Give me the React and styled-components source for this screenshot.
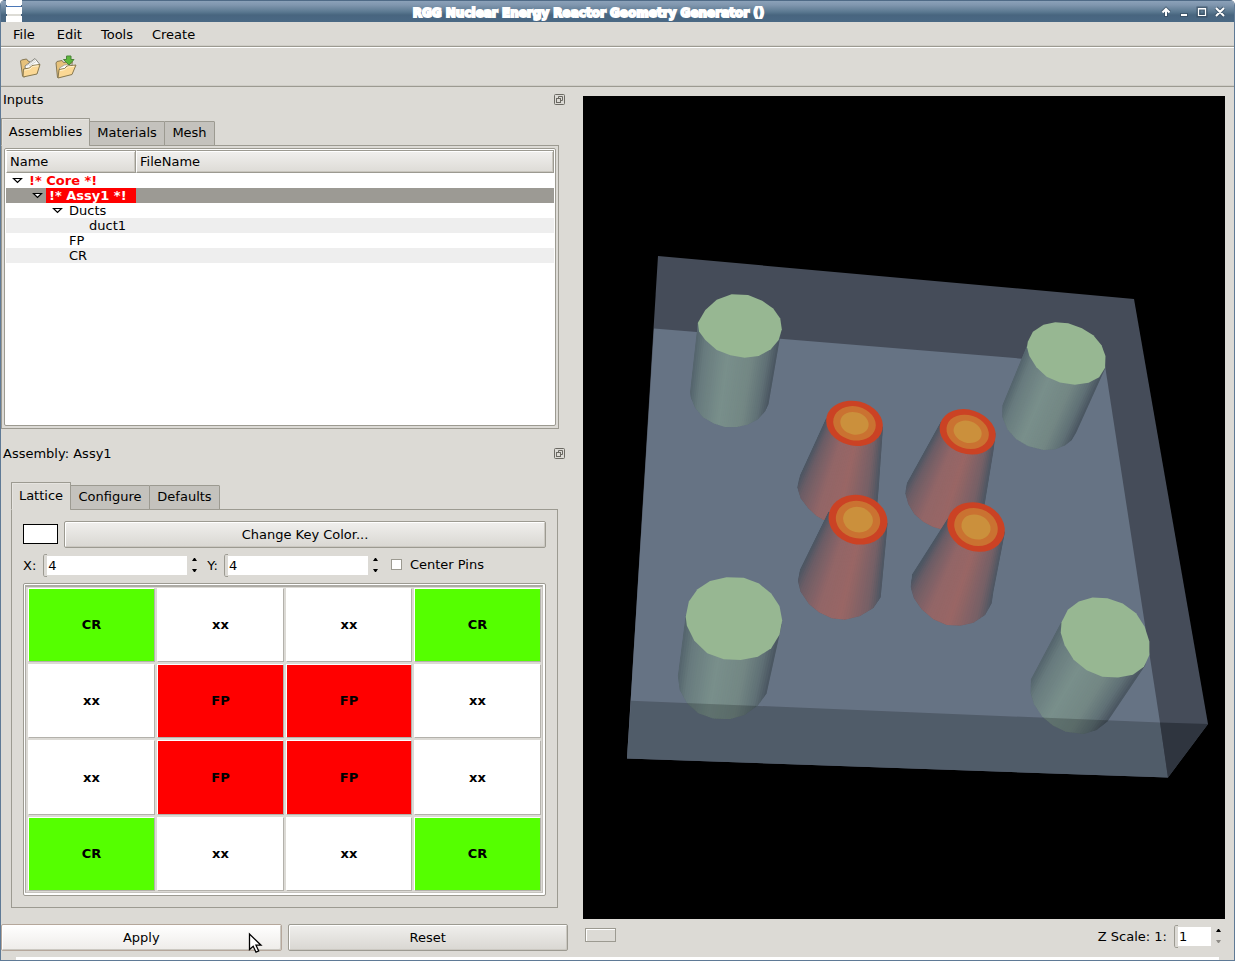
import React from "react";
import styled, { createGlobalStyle, css } from "styled-components";

const BG = "#dcdad5";
const LINE = "#9c9a91";

const GlobalStyle = createGlobalStyle`
  *, *::before, *::after { box-sizing: border-box; }
  html, body { margin: 0; padding: 0; background: #fff; }
  body { font: 13px/15px "DejaVu Sans", sans-serif; color: #000; overflow: hidden; }
`;

const Window = styled.div`
  position: relative;
  width: 1235px;
  height: 961px;
  display: flex;
  flex-direction: column;
  background: ${BG};
  border: 1px solid #5f7a96;
  border-top: 0;
  border-radius: 5px 5px 0 0;
  overflow: hidden;
`;

const TitleBar = styled.header`
  height: 22px;
  flex: none;
  display: flex;
  align-items: center;
  padding: 0 8px 0 5px;
  background: linear-gradient(#4f6a86 0, #4f6a86 1px, #8ba1b8 1px, #8096ae 5px, #5a7890 12px, #48657f 15px, #4a6884 22px);
`;

const AppMark = styled.svg`
  width: 16px;
  height: 22px;
  flex: none;
`;

const Title = styled.h1`
  flex: 1;
  margin: 0 0 0 -3px;
  padding-top: 4px;
  text-align: center;
  white-space: nowrap;
  font: bold 12px/18px "DejaVu Sans", sans-serif;
  color: #fff;
  -webkit-text-stroke: 1.8px #fff;
`;

const WindowControls = styled.svg`
  width: 68px;
  height: 22px;
  flex: none;
`;

const MenuBar = styled.nav`
  height: 26px;
  flex: none;
  display: flex;
  gap: 19px;
  padding: 5px 12px 0;
  border-bottom: 1px solid #fff;
  box-shadow: inset 0 -1px ${LINE}, inset 0 -2px #cfcdc7;
`;

const MenuItem = styled.span`
  &:first-child { margin-right: 3px; }
`;

const ToolBar = styled.div`
  height: 39px;
  flex: none;
  display: flex;
  gap: 12px;
  padding: 7px 16px 0;
  border-bottom: 1px solid ${LINE};
  box-shadow: inset 0 -1px #cfcdc7;
`;

const ToolIcon = styled.svg`
  width: 24px;
  height: 24px;
`;

const Content = styled.main`
  flex: 1;
  min-height: 0;
  display: flex;
  gap: 15px;
`;

const Side = styled.section`
  width: 567px;
  display: flex;
  flex-direction: column;
`;

const DockTitle = styled.div`
  height: 25px;
  display: flex;
  align-items: center;
  justify-content: space-between;
  margin-top: ${(p) => p.$top || 0}px;
  padding: 0 3px 0 2px;
`;

const FloatIcon = styled.svg`
  width: 11px;
  height: 11px;
`;

const Tabs = styled.div`
  display: flex;
  flex-direction: column;
  margin: ${(p) => p.$margin};
`;

const TabRow = styled.div`
  height: 28px;
  display: flex;
  align-items: flex-end;
  position: relative;
  margin-bottom: -1px;
`;

const Tab = styled.div`
  height: 25px;
  width: ${(p) => p.$w}px;
  margin-left: -1px;
  text-align: center;
  line-height: 22px;
  background: #c4c2bd;
  border: 1px solid ${LINE};
  border-radius: 1px 1px 0 0;
  ${(p) =>
    p.$active &&
    css`
      height: 28px;
      margin-left: 0;
      line-height: 26px;
      background: ${BG};
      border-bottom-color: ${BG};
      box-shadow: inset 1px 1px #e6e4e0;
    `}
`;

const Pane = styled.div`
  height: ${(p) => p.$h}px;
  border: 1px solid ${LINE};
  padding: ${(p) => p.$pad};
`;

const Tree = styled.div`
  height: 278px;
  border: 1px solid ${LINE};
  border-radius: 2px;
  padding: 1px 1px 0;
  background: #fff;
`;

const TreeHeader = styled.div`
  display: flex;
  height: 23px;
`;

const HeaderCell = styled.div`
  width: ${(p) => p.$w}px;
  padding-left: 3px;
  line-height: 21px;
  border: 1px solid ${LINE};
  border-left-color: #fff;
  background: linear-gradient(#f1f0ee, #dddbd6);
  box-shadow: inset 0 1px #fff, inset -1px -1px #c9c6be;
`;

const TreeRow = styled.div`
  height: 15px;
  display: flex;
  padding-left: ${(p) => p.$depth * 20 + 3}px;
  background: ${(p) => (p.$selected ? "#9c9a94" : p.$alt ? "#eeeeee" : "#fff")};
`;

const Twist = styled.svg`
  width: 17px;
  height: 15px;
  flex: none;
`;

const TreeLabel = styled.span`
  padding-left: 3px;
  ${(p) => p.$bold && css`font-weight: bold; color: #f00;`}
  ${(p) => p.$fill && css`width: 90px; color: #fff; background: #f00;`}
`;

const Button = styled.button`
  flex: 1;
  height: 27px;
  padding: 0;
  font: inherit;
  line-height: 24px;
  color: #000;
  border: 1px solid ${(p) => (p.$hover ? "#b5a79b" : LINE)};
  border-radius: 2px;
  background: ${(p) => (p.$hover ? "linear-gradient(#fff, #eeece9)" : "linear-gradient(#f0efed, #d9d7d2)")};
  box-shadow: inset 1px 1px #fff, inset -1px -1px #cbc8c1;
`;

const KeyRow = styled.div`
  display: flex;
  align-items: center;
  gap: 6px;
`;

const Swatch = styled.div`
  width: 35px;
  height: 20px;
  margin-bottom: 1px;
  border: 1px solid #000;
  background: #fff;
`;

const SizeRow = styled.div`
  display: flex;
  align-items: center;
  height: 35px;
`;

const Label = styled.label`
  white-space: nowrap;
  margin: ${(p) => p.$m || 0};
`;

const SpinField = styled.div`
  width: ${(p) => p.$w}px;
  height: 23px;
  display: flex;
  align-items: center;
  border-left: 1px solid ${LINE};
  border-radius: 3px 0 0 3px;
  background:
    linear-gradient(${LINE}, ${LINE}) 0 0 / 3px 1px no-repeat,
    linear-gradient(${LINE}, ${LINE}) 0 100% / 3px 1px no-repeat;
`;

const SpinValue = styled.span`
  flex: 1;
  height: 19px;
  line-height: 19px;
  margin-left: 3px;
  padding-left: 1px;
  background: #fff;
`;

const SpinArrows = styled.svg`
  width: 5px;
  height: 14px;
  flex: none;
  margin: 0 0 1px 5px;
`;

const CheckBox = styled.span`
  width: 11px;
  height: 11px;
  flex: none;
  margin: 0 8px 2px 13px;
  border: 1px solid ${LINE};
  background: #fff;
`;

const LatticeFrame = styled.div`
  height: 313px;
  border: 1px solid ${LINE};
  border-radius: 2px;
  background: #fff;
  padding: 1px 2px 2px 1px;
`;

const Lattice = styled.div`
  height: 100%;
  display: grid;
  grid-template-columns: 127px 127px 126px 127px;
  grid-template-rows: 74px 74px 75px 74px;
  gap: 2px;
  padding: 1px 1px 1px 2px;
  background: ${BG};
  border: 1px solid #c5c3be;
  border-width: 2px 1px 1px 1px;
  border-top-color: #adaba5;
  border-left-color: #adaba5;
`;

const cellFill = { CR: "#55ff00", FP: "#ff0000", xx: "#ffffff" };

const Cell = styled.div`
  display: flex;
  align-items: center;
  justify-content: center;
  padding-bottom: 1px;
  font-weight: bold;
  background: ${(p) => cellFill[p.$kind]};
  border: 1px solid #fff;
  border-right-color: #b3b1ab;
  border-bottom-color: #b3b1ab;
`;

const Actions = styled.div`
  display: flex;
  gap: 6px;
  margin-top: 16px;
`;

const ViewColumn = styled.section`
  width: 642px;
  padding-top: 9px;
`;

const Viewport = styled.svg`
  display: block;
  width: 642px;
  height: 823px;
  background: #000;
`;

const ScaleRow = styled.div`
  display: flex;
  align-items: center;
  height: 35px;
  padding: 0 4px 0 2px;
`;

const SliderHandle = styled.div`
  width: 31px;
  height: 14px;
  margin: 0 auto 3px 0;
  border: 1px solid ${LINE};
  background: ${BG};
  box-shadow: inset 1px 1px #fff;
`;

const StatusEdge = styled.footer`
  height: 3px;
  flex: none;
  margin: 0 15px;
  background: #fff;
`;

const Pointer = styled.svg`
  position: absolute;
  left: 246px;
  top: 932px;
  width: 16px;
  height: 22px;
`;

const FloatButton = () => (
  <FloatIcon viewBox="0 0 11 11" fill="none" stroke="#6b6963">
    <rect x=".5" y=".5" width="10" height="10" rx="1" />
    <path d="M4.500 4V2.500h4v4H7" />
    <rect x="2.500" y="4.500" width="4" height="4" />
  </FloatIcon>
);

const Expander = () => (
  <Twist viewBox="0 0 17 15">
    <path d="M4.500 5.500h8l-4 4z" fill="#fff" stroke="#000" strokeWidth="1.200" />
  </Twist>
);

const Arrows = ({ dim }) => (
  <SpinArrows viewBox="0 0 5 14">
    <path d="M0 3h5L3 0H2z" />
    <path d="M0 11h5l-2 3H2z" fill={dim ? "#8d8b86" : "#000"} />
  </SpinArrows>
);

const Folder = () => (
  <ToolIcon viewBox="0 0 24 24" strokeLinejoin="round">
    <path d="M3.500 6l1-1 5-1 1.500 2 2 1-5 15-2.500-1z" fill="#e6c17a" stroke="#857856" />
    <path d="M8 11l10-7.500 4.500 5.500-3 5-11 1z" fill="#fbfbfa" stroke="#83837b" />
    <path d="M10 10.500l8-5.500M12 11l7-4.500" stroke="#d4d4d0" fill="none" />
    <path d="M6.500 14l6-1 2.500-2.500 8-1-3 9.500-14 3z" fill="#fbd895" stroke="#87784f" />
    <path d="M7.500 15.200l5.500-1.200 2.500-2.500 6-.7" fill="none" stroke="#fff2cf" />
  </ToolIcon>
);

const ImportFolder = () => (
  <ToolIcon viewBox="0 0 24 24" strokeLinejoin="round">
    <path d="M3 8l1-1.500 5-1 1.500 2 9-1-3 12-12 4z" fill="#e6c17a" stroke="#857856" />
    <path d="M6.500 13l5-3 8-1-2 3-11 4z" fill="#fbfbfa" stroke="#9b9a90" strokeWidth=".8" />
    <path d="M6 14.500l5.500-1 2.500-2.500 9-1-4 9.500-14 3.500z" fill="#fbd895" stroke="#87784f" />
    <path d="M7 15.700l5-1.200 2.500-2.500 6.500-.7" fill="none" stroke="#fff2cf" />
    <path d="M13.500 1h4.500v3.500h3L16 10l-5.500-5.500h3z" fill="#5cb83a" stroke="#4b8438" />
  </ToolIcon>
);

const mix = (stops, t) => {
  let i = 0;
  while (i < stops.length - 2 && t > stops[i + 1][0]) i += 1;
  const [a, ca] = stops[i];
  const [b, cb] = stops[i + 1];
  const k = (t - a) / (b - a);
  return `rgb(${ca.map((c, n) => Math.round(c + (cb[n] - c) * k)).join(",")})`;
};

const GREEN = [
  [0, [84, 99, 108]],
  [0.12, [104, 123, 126]],
  [0.4, [121, 143, 139]],
  [0.7, [115, 135, 132]],
  [0.88, [96, 113, 118]],
  [1, [72, 84, 96]],
];
const RED = [
  [0, [75, 86, 99]],
  [0.11, [108, 93, 102]],
  [0.36, [146, 102, 103]],
  [0.6, [153, 102, 101]],
  [0.87, [118, 96, 102]],
  [1, [75, 86, 99]],
];

/* A tapered pin wall, shaded in strips from its left edge line to its right one. */
const Wall = ({ id, outline, left, right, ramp }) => {
  const n = 40;
  const at = (p, q, t) => [p[0] + (q[0] - p[0]) * t, p[1] + (q[1] - p[1]) * t];
  const far = (l) => at(l[0], l[1], 2.2);
  const near = (l) => at(l[0], l[1], -0.5);
  return (
    <g clipPath={`url(#${id})`}>
      <clipPath id={id}>
        <polygon points={outline} />
      </clipPath>
      <polygon points={outline} fill={mix(ramp, 0)} />
      {Array.from({ length: n }, (_, i) => {
        const a = i / n;
        const b = (i + 1.4) / n;
        const pts = [
          at(near(left), near(right), a),
          at(near(left), near(right), b),
          at(far(left), far(right), b),
          at(far(left), far(right), a),
        ];
        return <polygon key={i} points={pts.join(" ")} fill={mix(ramp, (i + 0.5) / n)} />;
      })}
    </g>
  );
};

const controlPins = [
  {
    left: [[198, 235], [179, 430]],
    right: [[412, 252], [380, 455]],
    wall: "198,232 196,260 179,425 181,440 192,470 212,496 240,514 270,524 295,524 325,517 352,502 370,480 379,460 408,275 413,250",
    cap: "199,232 218,196 247,167 285,152 327,154 363,170 391,192 409,220 413,250 405,280 385,306 354,325 318,330 282,323 247,308 218,280 202,256",
  },
  {
    left: [[1038, 295], [975, 465]],
    right: [[1239, 355], [1163, 540]],
    wall: "1038,295 975,463 975,495 988,530 1010,557 1040,577 1080,588 1110,586 1135,575 1152,560 1163,540 1237,360 1238,325",
    cap: "1040,285 1053,257 1080,237 1110,230 1143,233 1178,247 1207,267 1228,295 1238,325 1237,358 1222,384 1195,400 1160,405 1122,399 1088,383 1062,356 1044,325 1038,300",
  },
  {
    left: [[168, 1050], [148, 1220]],
    right: [[414, 1070], [375, 1268]],
    wall: "168,1050 148,1220 153,1260 172,1298 200,1325 238,1340 280,1342 318,1330 352,1303 374,1270 413,1075",
    cap: "168,1055 176,1012 198,978 230,955 272,944 316,946 355,962 386,990 407,1025 414,1065 407,1105 386,1143 352,1167 308,1176 265,1174 223,1157 190,1122 171,1080",
  },
  {
    left: [[1126, 1068], [1048, 1230]],
    right: [[1345, 1180], [1243, 1348]],
    wall: "1126,1068 1048,1230 1047,1268 1056,1300 1077,1335 1105,1360 1137,1377 1182,1383 1215,1372 1243,1348 1340,1190 1340,1100",
    cap: "1126,1070 1142,1035 1170,1012 1205,1001 1243,1003 1282,1018 1316,1045 1338,1083 1350,1125 1350,1162 1336,1195 1308,1217 1270,1225 1230,1223 1190,1205 1157,1175 1134,1135 1124,1100",
  },
];

const fuelPins = [
  {
    c: [223.5, 130], r: [[86, 67], [64.5, 51], [43, 33.5]], tilt: 13,
    left: [[138, 118], [55, 300]], right: [[309, 140], [296, 325]],
    wall: "138,115 60,285 52,322 62,355 85,385 110,408 131,420 200,430 291,380 296,325 309,140",
  },
  {
    c: [563, 155.5], r: [[86, 66], [65, 50], [43, 32.5]], tilt: 18,
    left: [[481, 130], [378, 315]], right: [[647, 165], [618, 345]],
    wall: "482,125 381,308 376,340 385,372 403,402 430,425 458,440 483,448 560,450 612,385 640,215 647,160",
  },
  {
    c: [234, 419], r: [[89, 74], [67, 56], [45, 38]], tilt: 13,
    left: [[145, 398], [56, 580]], right: [[323, 425], [302, 652]],
    wall: "145,395 60,568 54,603 62,635 87,672 117,697 155,715 195,719 240,708 280,684 302,652 305,620 323,430",
  },
  {
    c: [588, 441], r: [[88, 72.5], [66.5, 55.5], [44.5, 36.5]], tilt: 20,
    left: [[503, 418], [393, 600]], right: [[675, 450], [636, 665]],
    wall: "503,415 396,583 392,622 402,655 425,688 460,718 500,735 540,737 580,728 615,705 635,670 640,635 675,455",
  },
];
const ringFill = ["#cb4224", "#ca7231", "#cb903c"];

const Scene = () => (
  <Viewport viewBox="583 96 642 823">
    <polygon points="658,256 1134,299 1208,724 1168,777.500 627,758.500" fill="#454c59" />
    <polygon points="654,328.500 1105,365.500 1160,722.500 1168,777.500 627,758.500" fill="#667384" />
    <polygon points="1160,722.500 1208,724 1168,777.500" fill="#2f353f" />
    <g transform="translate(619.800 240) scale(.3923 .35714)">
      {controlPins.map((p, i) => (
        <g key={i}>
          <Wall id={`control${i}`} outline={p.wall} left={p.left} right={p.right} ramp={GREEN} />
          <polygon points={p.cap} fill="#97b792" />
        </g>
      ))}
    </g>
    <g transform="translate(780 380) scale(.33333)">
      {fuelPins.map((p, i) => (
        <g key={i}>
          <Wall id={`fuel${i}`} outline={p.wall} left={p.left} right={p.right} ramp={RED} />
          {p.r.map(([rx, ry], k) => (
            <ellipse
              key={k}
              cx={p.c[0]}
              cy={p.c[1]}
              rx={rx}
              ry={ry}
              fill={ringFill[k]}
              transform={`rotate(${p.tilt} ${p.c[0]} ${p.c[1]})`}
            />
          ))}
        </g>
      ))}
    </g>
    <polygon points="631,700.700 1160,722.500 1168,777.500 627,758.500" fill="#000403" fillOpacity=".208" />
  </Viewport>
);

const lattice = [
  "CR", "xx", "xx", "CR",
  "xx", "FP", "FP", "xx",
  "xx", "FP", "FP", "xx",
  "CR", "xx", "xx", "CR",
];

export default function App() {
  return (
    <>
      <GlobalStyle />
      <Window>
        <TitleBar>
          <AppMark viewBox="0 0 16 22">
            <path d="M0 0h16v22H0z" fill="#fff" />
            <path d="M0 6.500h16" stroke="#4b78b8" />
            <path d="M0 15h16" stroke="#dddcd6" strokeWidth="2" />
            <path d="M0 5h1v2H0zM15 5h1v2h-1zM0 14h1v2H0zM15 14h1v2h-1z" fill="#4a6480" />
          </AppMark>
          <Title>RGG Nuclear Energy Reactor Geometry Generator ()</Title>
          <WindowControls viewBox="1158 0 68 22" fill="none">
            <g stroke="#34495d" strokeWidth="4" opacity=".65">
              <path d="M1166 17V9M1162.500 12.500l3.500-3.500 3.500 3.500M1180 15h8M1198.500 8.500h7v7h-7zM1216 8l8 8M1224 8l-8 8" />
            </g>
            <g stroke="#fff" strokeWidth="2">
              <path d="M1166 16V9M1162.500 12.500l3.500-3.500 3.500 3.500M1181 15h6M1216 8l8 8M1224 8l-8 8" />
              <path d="M1198.500 8.500h7v7h-7zM1198 9h8" strokeWidth="1.200" />
            </g>
          </WindowControls>
        </TitleBar>
        <MenuBar>
          <MenuItem>File</MenuItem>
          <MenuItem>Edit</MenuItem>
          <MenuItem>Tools</MenuItem>
          <MenuItem>Create</MenuItem>
        </MenuBar>
        <ToolBar>
          <Folder />
          <ImportFolder />
        </ToolBar>
        <Content>
          <Side>
            <DockTitle>
              <span>Inputs</span>
              <FloatButton />
            </DockTitle>
            <Tabs $margin="6px 9px 0 0">
              <TabRow>
                <Tab $active $w={89}>Assemblies</Tab>
                <Tab $w={76}>Materials</Tab>
                <Tab $w={51}>Mesh</Tab>
              </TabRow>
              <Pane $h={284} $pad="2px 2px 0 2px">
                <Tree>
                  <TreeHeader>
                    <HeaderCell $w={130}>Name</HeaderCell>
                    <HeaderCell $w={418}>FileName</HeaderCell>
                  </TreeHeader>
                  <TreeRow $depth={0}>
                    <Expander />
                    <TreeLabel $bold>!* Core *!</TreeLabel>
                  </TreeRow>
                  <TreeRow $depth={1} $selected>
                    <Expander />
                    <TreeLabel $bold $fill>!* Assy1 *!</TreeLabel>
                  </TreeRow>
                  <TreeRow $depth={2}>
                    <Expander />
                    <TreeLabel>Ducts</TreeLabel>
                  </TreeRow>
                  <TreeRow $depth={3.85} $alt>
                    <TreeLabel>duct1</TreeLabel>
                  </TreeRow>
                  <TreeRow $depth={2.85}>
                    <TreeLabel>FP</TreeLabel>
                  </TreeRow>
                  <TreeRow $depth={2.85} $alt>
                    <TreeLabel>CR</TreeLabel>
                  </TreeRow>
                </Tree>
              </Pane>
            </Tabs>
            <DockTitle $top={12}>
              <span>Assembly: Assy1</span>
              <FloatButton />
            </DockTitle>
            <Tabs $margin="16px 10px 0 10px">
              <TabRow>
                <Tab $active $w={60}>Lattice</Tab>
                <Tab $w={80}>Configure</Tab>
                <Tab $w={71}>Defaults</Tab>
              </TabRow>
              <Pane $h={399} $pad="11px 11px 0 11px">
                <KeyRow>
                  <Swatch />
                  <Button>Change Key Color...</Button>
                </KeyRow>
                <SizeRow>
                  <Label $m="0 7px 0 0">X:</Label>
                  <SpinField $w={144}><SpinValue>4</SpinValue></SpinField>
                  <Arrows />
                  <Label $m="0 6px 0 10px">Y:</Label>
                  <SpinField $w={144}><SpinValue>4</SpinValue></SpinField>
                  <Arrows />
                  <CheckBox />
                  <Label $m="0 0 2px 0">Center Pins</Label>
                </SizeRow>
                <LatticeFrame>
                  <Lattice>
                    {lattice.map((kind, i) => (
                      <Cell key={i} $kind={kind}>{kind}</Cell>
                    ))}
                  </Lattice>
                </LatticeFrame>
              </Pane>
            </Tabs>
            <Actions>
              <Button $hover>Apply</Button>
              <Button>Reset</Button>
            </Actions>
          </Side>
          <ViewColumn>
            <Scene />
            <ScaleRow>
              <SliderHandle />
              <Label $m="0 7px 0 0">Z Scale: 1:</Label>
              <SpinField $w={37}><SpinValue>1</SpinValue></SpinField>
              <Arrows dim />
            </ScaleRow>
          </ViewColumn>
        </Content>
        <StatusEdge />
        <Pointer viewBox="0 0 16 22">
          <path d="M2.500 2v15.500l3.700-3.300 2.800 6 2.700-1.200-2.700-5.800h5z" fill="#fff" stroke="#000" strokeWidth="1.300" />
        </Pointer>
      </Window>
    </>
  );
}
